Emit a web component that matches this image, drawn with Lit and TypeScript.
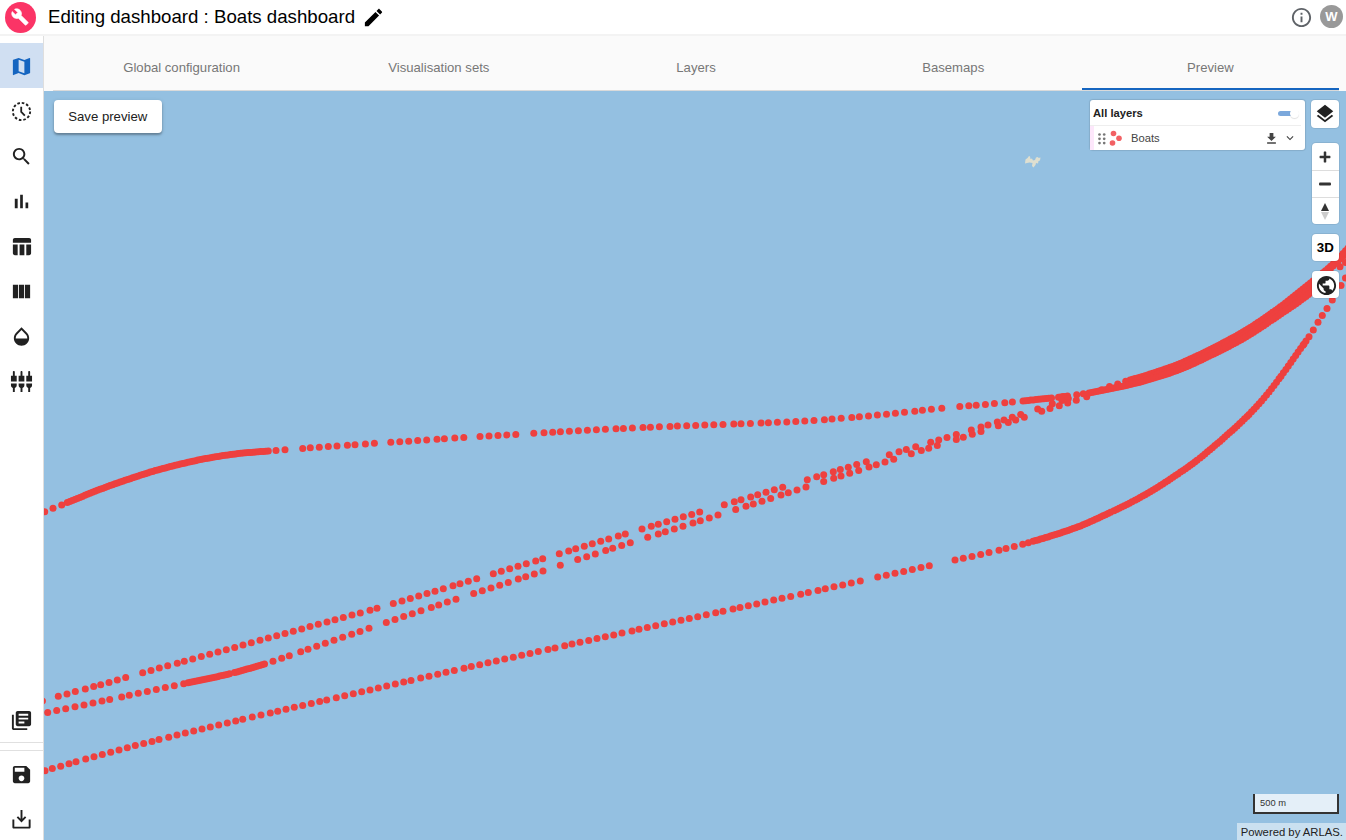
import { LitElement, html, svg, css } from "lit";
import { customElement, state } from "lit/decorators.js";

type Pt = [number, number];

const ICONS: Record<string, string> = {
  wrench: "M22.7 19l-9.1-9.1c.9-2.3.4-5-1.5-6.9-2-2-5-2.4-7.4-1.3L9 6 6 9 1.6 4.7C.4 7.1.9 10.1 2.9 12.1c1.9 1.9 4.6 2.4 6.9 1.5l9.1 9.1c.4.4 1 .4 1.4 0l2.3-2.3c.5-.4.5-1.1.1-1.4z",
  edit: "M3 17.25V21h3.75L17.81 9.94l-3.75-3.75L3 17.25zM20.71 7.04c.39-.39.39-1.02 0-1.41l-2.34-2.34c-.39-.39-1.02-.39-1.41 0l-1.83 1.83 3.75 3.75 1.83-1.83z",
  info: "M11 7h2v2h-2zm0 4h2v6h-2zm1-9C6.48 2 2 6.48 2 12s4.48 10 10 10 10-4.48 10-10S17.52 2 12 2zm0 18c-4.41 0-8-3.59-8-8s3.59-8 8-8 8 3.59 8 8-3.59 8-8 8z",
  map: "M20.5 3l-.16.03L15 5.1 9 3 3.36 4.9c-.21.07-.36.25-.36.48V20.5c0 .28.22.5.5.5l.16-.03L9 18.9l6 2.1 5.64-1.9c.21-.07.36-.25.36-.48V3.5c0-.28-.22-.5-.5-.5zM15 19l-6-2.11V5l6 2.11V19z",
  search: "M15.5 14h-.79l-.28-.27C15.41 12.59 16 11.11 16 9.5 16 5.91 13.09 3 9.5 3S3 5.91 3 9.5 5.91 16 9.5 16c1.61 0 3.09-.59 4.23-1.57l.27.28v.79l5 4.99L20.49 19l-4.99-5zm-6 0C7.01 14 5 11.99 5 9.5S7.01 5 9.5 5 14 7.01 14 9.5 11.99 14 9.5 14z",
  bars: "M5 9.2h3V19H5zM10.6 5h2.8v14h-2.8zm5.6 8H19v6h-2.8z",
  table: "M10 10.02h5V21h-5zM17 21h3c1.1 0 2-.9 2-2v-9h-5v11zm3-18H5c-1.1 0-2 .9-2 2v3h19V5c0-1.1-.9-2-2-2zM3 19c0 1.1.9 2 2 2h3V10H3v9z",
  columns: "M3 5h5.4v14H3zM9.3 5h5.4v14H9.3zM15.6 5H21v14h-5.4z",
  opacity: "M17.66 8L12 2.35 6.34 8C4.78 9.56 4 11.64 4 13.64s.78 4.11 2.34 5.67 3.61 2.35 5.66 2.35 4.1-.79 5.66-2.35S20 15.64 20 13.64 19.22 9.56 17.66 8zM6 14c.01-2 .62-3.27 1.76-4.4L12 5.27l4.24 4.38C17.38 10.77 17.99 12 18 14H6z",
  input: "M5 2c0-.55-.45-1-1-1s-1 .45-1 1v4H1v6h6V6H5V2zm4 14c0 1.300.84 2.400 2 2.820V23h2v-4.180c1.160-.41 2-1.510 2-2.820v-2H9v2zm-8 0c0 1.300.84 2.400 2 2.820V23h2v-4.180C6.160 18.400 7 17.300 7 16v-2H1v2zM21 6V2c0-.55-.45-1-1-1s-1 .45-1 1v4h-2v6h6V6h-2zm-8-4c0-.55-.45-1-1-1s-1 .45-1 1v4H9v6h6V6h-2V2zm4 14c0 1.300.84 2.400 2 2.820V23h2v-4.180c1.160-.41 2-1.510 2-2.820v-2h-6v2z",
  library: "M4 6H2v14c0 1.100.9 2 2 2h14v-2H4V6zm16-4H8c-1.100 0-2 .9-2 2v12c0 1.100.9 2 2 2h12c1.100 0 2-.9 2-2V4c0-1.100-.9-2-2-2zm-1 9H9V9h10v2zm-4 4H9v-2h6v2zm4-8H9V5h10v2z",
  save: "M17 3H5c-1.110 0-2 .9-2 2v14c0 1.100.89 2 2 2h14c1.100 0 2-.9 2-2V7l-4-4zm-5 16c-1.660 0-3-1.340-3-3s1.340-3 3-3 3 1.340 3 3-1.340 3-3 3zm3-10H5V5h10v4z",
  exportDown: "M11 2h2v9.200l2.600-2.600L17 10l-5 5-5-5 1.400-1.400 2.600 2.600zM2.500 12h2v7.500h15V12h2v8c0 .9-.6 1.500-1.500 1.500H4c-.9 0-1.500-.6-1.500-1.500z",
  layers: "M11.99 18.540l-7.370-5.730L3 14.070l9 7 9-7-1.630-1.270-7.380 5.740zM12 16l7.360-5.730L21 9l-9-7-9 7 1.630 1.270L12 16z",
  download: "M19 9h-4V3H9v6H5l7 7 7-7zM5 18v2.500h14V18H5z",
  chevron: "M7.410 8.590L12 13.170l4.590-4.580L18 10l-6 6-6-6 1.410-1.410z",
  globe: "M12 2C6.480 2 2 6.480 2 12s4.480 10 10 10 10-4.480 10-10S17.520 2 12 2zm-1 17.930c-3.950-.49-7-3.850-7-7.930 0-.62.080-1.210.21-1.790L9 15v1c0 1.100.9 2 2 2v1.930zm6.900-2.540c-.26-.81-1-1.390-1.900-1.390h-1v-3c0-.55-.45-1-1-1H8v-2h2c.55 0 1-.45 1-1V7h2c1.100 0 2-.9 2-2v-.41c2.930 1.190 5 4.060 5 7.410 0 2.080-.8 3.970-2.100 5.390z",
  plus: "M11 5.500h2a.5.500 0 0 1 .5.500v4.500H18a.5.500 0 0 1 .5.500v2a.5.500 0 0 1-.5.500h-4.500V18a.5.500 0 0 1-.5.500h-2a.5.500 0 0 1-.5-.5v-4.500H6a.5.500 0 0 1-.5-.5v-2a.5.500 0 0 1 .5-.5h4.500V6a.5.500 0 0 1 .5-.5z",
};

const icon = (name: string, size = 23, cls = "") =>
  name === "clock"
    ? html`<svg class="ic ${cls}" width=${size} height=${size} viewBox="0 0 24 24">
        <circle cx="12" cy="12" r="9" fill="none" stroke="currentColor" stroke-width="2" stroke-dasharray="2.700 2.012" />
        <path d="M11.700 7v5.500l3.800 3.800" fill="none" stroke="currentColor" stroke-width="1.900" />
      </svg>`
    : html`<svg class="ic ${cls}" width=${size} height=${size} viewBox="0 0 24 24">
        <path d=${ICONS[name]} fill="currentColor" />
      </svg>`;

/* Vertical position along a track, by smooth interpolation of its anchors. */
function yAt(a: Pt[], x: number): number {
  const n = a.length;
  const slope = (i: number) => {
    const p = a[Math.max(0, i - 1)];
    const q = a[Math.min(n - 1, i + 1)];
    return (q[1] - p[1]) / (q[0] - p[0]);
  };
  let i = 0;
  while (i < n - 2 && x > a[i + 1][0]) i++;
  const h = a[i + 1][0] - a[i][0];
  const t = (x - a[i][0]) / h;
  const t2 = t * t;
  const t3 = t2 * t;
  return (
    (2 * t3 - 3 * t2 + 1) * a[i][1] +
    (t3 - 2 * t2 + t) * h * slope(i) +
    (-2 * t3 + 3 * t2) * a[i + 1][1] +
    (t3 - t2) * h * slope(i + 1)
  );
}

interface Track {
  anchors: Pt[];
  xs: number[];
  runs: Pt[];
}

const TRACKS: Track[] = [
  {
    anchors: [[44.700, 511.700], [53, 508.300], [61.700, 505], [67.300, 502.600], [100, 489.300], [130, 478.700], [160, 469.300], [200, 459.700], [235, 454], [268.300, 451], [285, 449.700], [310.300, 447.800], [337, 446], [374.400, 443.300], [390.800, 442.300], [426.700, 440], [463.800, 437.500], [515.800, 434.400], [569.400, 431.200], [605.400, 429.200], [659.400, 426.800], [713.800, 424.700], [777.400, 422.300], [814, 420.500], [841.200, 418.300], [895.400, 413.300], [941.800, 408.200], [959.800, 406.600], [1012.400, 402], [1022.400, 401], [1051, 398], [1068, 396], [1083, 393.700]],
    xs: [44.700, 53, 61.700, 276, 285, 302.700, 310.300, 319.300, 328.300, 337, 347.400, 355, 365.400, 374.400, 390.800, 399.800, 408.700, 417.700, 426.700, 437, 444.400, 454.800, 463.800, 480, 489, 498, 506.800, 515.800, 533.800, 544, 552.700, 560.400, 569.400, 578.400, 587.400, 596.400, 605.400, 616, 623.400, 632.400, 643, 650.400, 659.400, 670, 677.400, 686.700, 695.700, 704.800, 713.800, 723, 733.800, 741, 750.400, 761, 768.400, 777.400, 786.800, 795.800, 804.800, 814, 824.400, 832, 841.200, 851.800, 859.400, 868.500, 877.400, 886.500, 895.400, 904.500, 914.800, 922.400, 931.400, 941.800, 959.800, 968.800, 976.200, 985.400, 994.400, 1004.800, 1012.400, 1076.700, 1083.300],
    runs: [[67.300, 268.300], [1023, 1051.500], [1058.500, 1067.500]],
  },
  {
    anchors: [[42.500, 701], [58.300, 696.300], [100.700, 684.700], [142.700, 672.700], [184.300, 661.300], [226.300, 649.700], [268.300, 638], [310, 626.600], [343.300, 617.500], [377, 608.300], [393.300, 603.500], [443.300, 588.700], [476.700, 578.700], [518, 566.300], [559.300, 553.700], [600.700, 541.300], [642, 529], [699.700, 512], [724.300, 504.700], [782.700, 487.300], [807.300, 479.700], [866.300, 461.700], [889.300, 454.700], [930.700, 442.300], [988, 425], [1020.700, 414.600], [1037.700, 408.900], [1052.300, 403.700], [1068.300, 398.500]],
    xs: [42.500, 58.300, 67, 75.300, 85.300, 93.700, 100.700, 109, 117.300, 125.700, 142.700, 151, 159.300, 167.700, 177.300, 184.300, 192.700, 201.300, 209.700, 218, 226.300, 234.700, 243, 251.300, 260, 268.300, 276.700, 285, 293.300, 301.700, 310, 318.300, 327, 335, 343.300, 352, 360.300, 370, 377, 393.300, 402, 410.300, 418.700, 427, 435, 443.300, 453, 460, 468.300, 476.700, 493.300, 501.300, 509.700, 518, 526.300, 535.700, 542.700, 559.300, 568.700, 575.700, 584.300, 592.300, 600.700, 608.700, 618.300, 625.300, 642, 651.300, 658.300, 666.700, 675, 683.300, 691.700, 699.700, 724.300, 734.300, 741, 750.700, 757.700, 766, 774.300, 782.700, 807.300, 816.700, 823.700, 833.300, 840.300, 848.300, 856.700, 866.300, 889.300, 899, 906.300, 915.700, 930.700, 938.700, 947, 956.300, 971.300, 981, 988, 997.300, 1004, 1012.300, 1020.700, 1037.700, 1052.300, 1062, 1068.300],
    runs: [],
  },
  {
    anchors: [[47.700, 712.400], [93, 703], [138.300, 693.300], [183.700, 683.700], [210, 678.300], [230, 673.700], [250, 668.300], [264.300, 664], [289.300, 655.700], [325.300, 643.300], [369, 628.300], [412.300, 613.700], [456, 599.300], [499.700, 585.200], [543, 571], [595.300, 553.900], [647.700, 537.300], [700.300, 520.700], [753.300, 504], [806, 487], [858.700, 470.400], [911.300, 453.700], [963.300, 437.200], [1024.300, 417.300], [1041.700, 411.300], [1067.700, 403], [1086.700, 396.700], [1095, 394]],
    xs: [47.700, 56.700, 65.700, 75, 84, 93, 102, 109.700, 121.700, 129.300, 138.300, 147.300, 156.300, 165.300, 174.300, 183.700, 273, 281.700, 289.300, 300.700, 308, 316.700, 325.300, 334, 342.700, 351.700, 360, 369, 386.300, 395, 403.700, 412.300, 421, 431.300, 438.700, 447.300, 456, 473.700, 482.300, 491, 499.700, 508.300, 518.300, 525.700, 534.300, 543, 560.300, 577.700, 586.700, 595.300, 605.700, 612.700, 621.700, 630.300, 647.700, 658.300, 665.300, 674.300, 683, 693, 700.300, 709.300, 718, 735.700, 746, 753.300, 762, 770.700, 781, 788.300, 797, 806, 823.700, 833.700, 841, 849.700, 858.700, 869, 876.300, 885, 893.700, 911.300, 921.300, 928.700, 937.300, 956.300, 963.300, 972.300, 981, 998.300, 1008.300, 1015.700, 1024.300, 1041.700, 1050, 1059.300, 1067.700, 1076.300, 1086.700],
    runs: [[188, 229.500], [234.500, 264.500]],
  },
  {
    anchors: [[45, 770.700], [85.700, 759.100], [127.300, 747.700], [168.700, 737.200], [210.300, 727], [252.300, 717.100], [294.300, 707.300], [344.700, 695.800], [395.300, 684], [454.300, 670.400], [521.700, 655.300], [588.700, 640.400], [655.700, 625.700], [723, 611.200], [790.700, 596.400], [860.300, 581], [929.300, 565.700], [989, 552.600], [1028.300, 542.700], [1076.700, 527.300], [1108, 513.500], [1133, 501.300], [1158, 487], [1185, 469], [1198, 459.500], [1223.300, 438.300], [1246.700, 416.700], [1263.300, 398.800], [1280, 377.500], [1296.700, 354], [1309, 336.700], [1318, 322.300], [1332.300, 300], [1345.500, 278]],
    xs: [45, 52.300, 60.700, 69, 76, 85.700, 94, 102.300, 110.700, 119, 127.300, 135.300, 143.700, 152, 159, 168.700, 177, 185.300, 193.700, 202, 210.300, 218.700, 227.300, 235.700, 242.700, 252.300, 261, 270.300, 277.700, 286, 294.300, 302.700, 311.300, 319.700, 326.700, 336.300, 344.700, 353.300, 361.700, 370, 378.300, 386.700, 395.300, 403.700, 411, 420.700, 429, 437.700, 446, 454.300, 464, 471.300, 479.700, 488, 496.300, 504.700, 513.300, 521.700, 530, 538.300, 548, 555, 564.700, 572, 580, 588.700, 597, 605.300, 613.700, 622, 632, 639, 647.300, 655.700, 664.300, 672.700, 681, 689.300, 697.700, 706.300, 715.700, 723, 733, 740, 748.300, 756.700, 765, 773.700, 782, 790.700, 800.700, 808.300, 818, 825.300, 834, 842.700, 851.300, 860.300, 877.700, 886.300, 895, 903.700, 912.300, 921, 929.300, 955, 963.300, 972, 980.700, 989, 999, 1006, 1014.300, 1022.700, 1028.300, 1309, 1313.300, 1318, 1322.300, 1327, 1332.300, 1341, 1345.500],
    runs: [[1033, 1110.500], [1114, 1132], [1135, 1185.500], [1188, 1197], [1200, 1247], [1249, 1279], [1281, 1303], [1304, 1306]],
  },
  {
    anchors: [[1089, 393], [1101.700, 389.700], [1109.500, 386.500], [1117.700, 384], [1125.700, 381.300], [1146, 375.400], [1179.300, 363.800], [1212.700, 348.200], [1246, 330.100], [1279.300, 307.600], [1309.300, 283.800], [1332.700, 264.300], [1348, 248]],
    xs: [1101.700, 1109.500, 1117.700, 1125.700],
    runs: [[1130, 1348]],
  },
  {
    anchors: [[1130, 383], [1146, 377.900], [1179.300, 366.700], [1212.700, 351.300], [1246, 333.500], [1279.300, 311.300], [1309.300, 288.800], [1332, 267], [1348, 251.500]],
    xs: [],
    runs: [[1130, 1348]],
  },
  {
    anchors: [[1089, 393], [1108, 389.300], [1129, 384.800], [1146, 380.400], [1179.300, 369.600], [1212.700, 354.400], [1246, 336.900], [1279.300, 315], [1309.300, 293.900], [1338, 268.500], [1346, 262]],
    xs: [1340, 1345.500],
    runs: [[1089, 1316]],
  },
];

const DOTS: Pt[] = TRACKS.flatMap((t) => {
  const xs = [...t.xs];
  for (const [from, to] of t.runs) {
    const n = Math.max(1, Math.round((to - from) / 2.500));
    for (let i = 0; i <= n; i++) xs.push(from + ((to - from) * i) / n);
  }
  return xs.map((x): Pt => [x, yAt(t.anchors, x)]);
});

@customElement("app-root")
export class AppRoot extends LitElement {
  @state() private active = 4;

  private tabs = ["Global configuration", "Visualisation sets", "Layers", "Basemaps", "Preview"];
  private nav = ["map", "clock", "search", "bars", "table", "columns", "opacity", "input"];

  static styles = css`
    :host { display: flex; flex-direction: column; height: 840px; overflow: hidden; background: #fff; color: #212121; font-family: "Liberation Sans", Arial, sans-serif; }
    * { box-sizing: border-box; }
    .ic { display: block; flex: none; }
    header { display: flex; align-items: center; height: 36px; flex: none; border-bottom: 2px solid #f3f3f3; padding: 0 3px 0 5px; color: #000; }
    .logo { width: 31px; height: 31px; border-radius: 50%; background: #fb3466; color: #fff; display: grid; place-items: center; padding: 0 2px 1px 0; }
    .logo path { stroke: #fff; stroke-width: .8; }
    h1 { margin: 0 7px 1px 12px; font-size: 18.670px; font-weight: 400; line-height: 24px; white-space: nowrap; }
    .info { margin-left: auto; margin-right: 7px; color: #5f6368; margin-top: 1px; }
    .avatar { width: 23px; height: 23px; border-radius: 50%; background: #999; color: #fff; font-weight: 700; font-size: 13px; line-height: 23px; text-align: center; margin-top: -1px; }
    .body { display: flex; flex: 1; min-height: 0; }
    nav { width: 44px; flex: none; border-right: 1px solid #dedede; display: flex; flex-direction: column; padding-top: 7px; }
    .item { height: 45px; flex: none; display: grid; place-items: center; padding-top: 2px; }
    .item.on { background: #d0dff2; color: #1565c0; }
    .spacer { flex: 1; }
    .foot { border-top: 1px solid #e0e0e0; margin-top: 7px; margin-bottom: -1px; }
    .lib { border-bottom: 1px solid #e0e0e0; padding-top: 1px; }
    main { flex: 1; min-width: 0; display: flex; flex-direction: column; }
    .tabs { display: flex; height: 55px; flex: none; background: #fafafa; padding: 0 7px 0 9px; }
    .tab { flex: 1; border-bottom: 1px solid #dadada; color: #777; font-size: 13.130px; text-align: center; line-height: 16px; padding-top: 24px; }
    .tab.on { position: relative; }
    .tab.on::after { content: ""; position: absolute; left: 0; right: 0; bottom: 0; height: 2px; background: #1565c0; }
    .map { position: relative; flex: 1; min-height: 0; background: #94c0e1; overflow: hidden; }
    .canvas { display: block; width: 1302px; height: 749px; }
    .over { position: absolute; }
    .preview { left: 9.500px; top: 9px; width: 108.500px; height: 33px; border: 0; border-radius: 4px; background: #fff; color: #212121; font: 13.200px "Liberation Sans", sans-serif; box-shadow: 0 2px 2px rgba(0, 0, 0, .25), 0 1px 4px rgba(0, 0, 0, .15); padding: 0; }
    .legend { left: 1046px; top: 9px; width: 215px; height: 50px; background: #fff; border-radius: 3px; box-shadow: 0 0 1px 1px rgba(0, 0, 0, .1); }
    .all { display: flex; align-items: center; height: 26px; margin-right: 4px; padding: 1px 2px 0 3px; border-bottom: 1px solid #eee; font-size: 11.200px; font-weight: 700; }
    .toggle { margin-left: auto; width: 21px; display: flex; align-items: center; }
    .bar { width: 15px; height: 5px; border-radius: 3px; background: #7ba8dc; }
    .knob { width: 9px; height: 9px; border-radius: 50%; background: #fff; margin-left: -3px; box-shadow: 0 1px 1px rgba(0, 0, 0, .12); }
    .layer { display: flex; align-items: center; height: 24px; border-left: 4px solid #fde7fb; font-size: 11.200px; color: #444; }
    .boat { margin-right: 8px; margin-left: -1px; }
    .dl { margin-left: auto; margin-right: 4px; }
    .chev { margin-right: 8px; }
    .tools { left: 1266px; top: 9px; width: 29px; display: flex; flex-direction: column; align-items: flex-end; }
    .box { width: 27.500px; background: #fff; border-radius: 4px; box-shadow: 0 0 0 1px rgba(0, 0, 0, .07); margin-bottom: 10px; }
    .cell { height: 27px; display: grid; place-items: center; color: #333; font: 700 13.300px "Liberation Sans", sans-serif; }
    .cell + .cell { border-top: 1px solid #ddd; }
    .dark { color: #000; }
    .world { color: #212121; padding: 2px 0 0 2px; }
    .first { width: 28.500px; margin-bottom: 15px; }
    .first .cell { height: 28px; color: #212121; }
    .scale { right: 7px; bottom: 26px; width: 86px; height: 20px; background: rgba(255, 255, 255, .75); border: 2px solid #333; border-top: 0; font-size: 9.330px; line-height: 19px; padding-left: 5px; color: #333; }
    .attr { right: 0; bottom: 0; width: 109px; height: 17px; background: rgba(255, 255, 255, .5); font-size: 11.300px; line-height: 18px; text-align: right; padding-right: 3px; color: #222; white-space: nowrap; }
  `;

  render() {
    return html`
      <header>
        <span class="logo">${icon("wrench", 18)}</span>
        <h1>Editing dashboard : Boats dashboard</h1>
        ${icon("edit", 23)}
        ${icon("info", 23, "info")}
        <span class="avatar">W</span>
      </header>
      <div class="body">
        <nav>
          ${this.nav.map((n, i) => html`<div class="item ${i === 0 ? "on" : ""}">${icon(n)}</div>`)}
          <div class="spacer"></div>
          <div class="item lib">${icon("library")}</div>
          <div class="foot">
            <div class="item">${icon("save")}</div>
            <div class="item">${icon("exportDown")}</div>
          </div>
        </nav>
        <main>
          <div class="tabs">
            ${this.tabs.map((t, i) => html`<div class="tab ${i === this.active ? "on" : ""}" @click=${() => (this.active = i)}>${t}</div>`)}
          </div>
          <div class="map">
            <svg class="canvas" viewBox="44 91 1302 749">
              <path d="M1025 163.500l.5-4 2-1.500 1.500-2 1 .5.500 2.500 1.500-.5 1 2 2-.5 1-2.500 2-.5.5 1 2-.5-.5 3-1.500.5-.5 2.500-2-.5-.5 2-2 2.500-1.500-1.500.5-3-3-.5-2.500.5z" fill="#dfdfd0" />
              <g fill="#ee403f">${DOTS.map(([x, y]) => svg`<circle cx=${x.toFixed(1)} cy=${y.toFixed(1)} r="3.500" />`)}</g>
            </svg>
            <button class="over preview">Save preview</button>
            <div class="over legend">
              <div class="all">All layers<span class="toggle"><span class="bar"></span><span class="knob"></span></span></div>
              <div class="layer">
                <svg class="ic" width="15" height="15" viewBox="0 0 15 15">
                  <g fill="#777">${[3.5, 7.8, 12.1].map((y) => svg`<circle cx="5.500" cy=${y} r="1.350" /><circle cx="10.200" cy=${y} r="1.350" />`)}</g>
                </svg>
                <svg class="ic boat" width="15" height="18" viewBox="0 0 15 18"><g fill="#f26164"><circle cx="5.500" cy="4.500" r="2.800" /><circle cx="11" cy="9.200" r="2.800" /><circle cx="4.500" cy="14" r="2.800" /></g></svg>
                Boats
                ${icon("download", 15, "dl")}
                ${icon("chevron", 14, "chev")}
              </div>
            </div>
            <div class="over tools">
              <div class="box first"><div class="cell">${icon("layers", 22)}</div></div>
              <div class="box">
                <div class="cell">${icon("plus", 20)}</div>
                <div class="cell"><svg class="ic" width="12" height="4"><rect width="12" height="3" y=".5" rx="1" fill="#333" /></svg></div>
                <div class="cell"><svg class="ic" width="10" height="17" viewBox="0 0 10 17"><path d="M1 8l4-8 4 8z" fill="#333" /><path d="M1 9l4 8 4-8z" fill="#ccc" /></svg></div>
              </div>
              <div class="box"><div class="cell dark">3D</div></div>
              <div class="box"><div class="cell world">${icon("globe", 23)}</div></div>
            </div>
            <div class="over scale">500 m</div>
            <div class="over attr">Powered by ARLAS.</div>
          </div>
        </main>
      </div>
    `;
  }
}
